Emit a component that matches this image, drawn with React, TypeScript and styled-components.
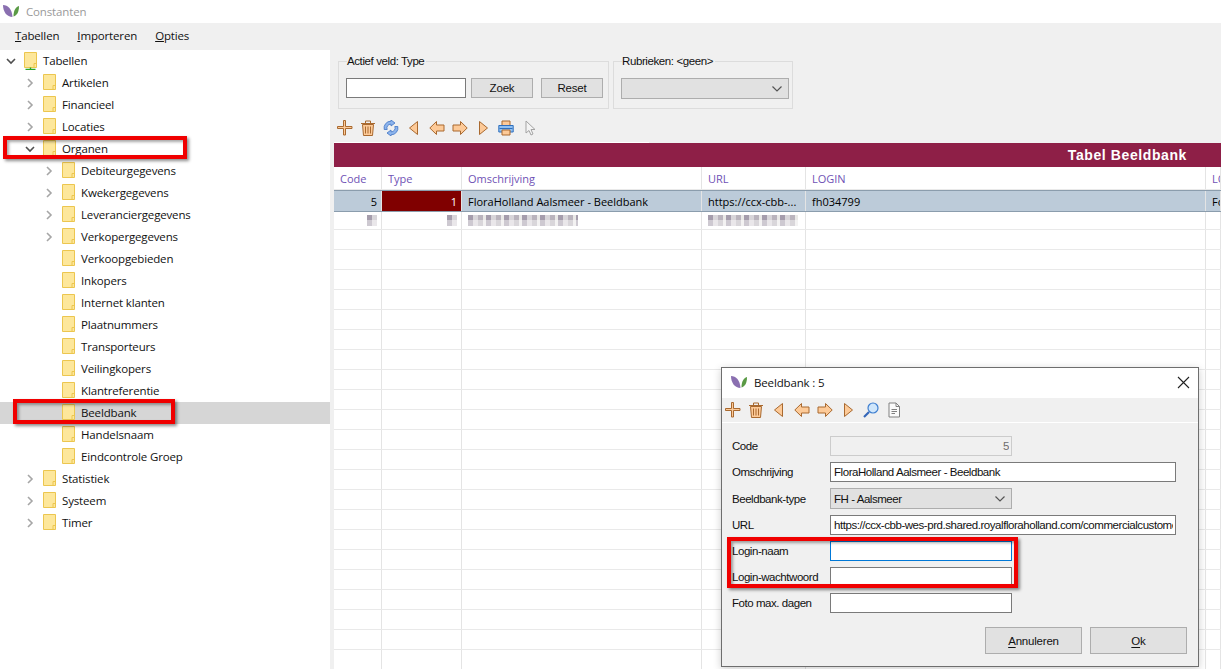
import React from "react";
import styled, { createGlobalStyle } from "styled-components";

const GlobalStyle = createGlobalStyle`
  html, body {
    margin: 0;
    padding: 0;
    background: #f0f0f0;
  }
  * {
    box-sizing: border-box;
  }
`;

const UI_FONT = `"Open Sans", "Noto Sans", sans-serif`;
const FORM_FONT = `"Liberation Sans", Arial, sans-serif`;

const stroke = "#a9692f";
const fill = "#fdca98";

/* ---------- icons ---------- */

function Logo({ size = 18 }: { size?: number }) {
  return (
    <svg width={size} height={size * 0.78} viewBox="0 0 18 14">
      <path d="M1 1C6 1 10 5 10.5 13C5 13 1 8 1 1Z" fill="#8a6fb0" />
      <path d="M17 2C13.5 3 11.5 6.5 11.5 12.5C15 11.5 17 8 17 2Z" fill="#5a9a45" />
    </svg>
  );
}

function Chevron({ open }: { open: boolean }) {
  return (
    <svg width="10" height="10" viewBox="0 0 10 10" fill="none">
      {open ? (
        <path d="M1 3L5 7L9 3" stroke="#4f4f4f" strokeWidth="1.6" />
      ) : (
        <path d="M3 1L7 5L3 9" stroke="#a6a6a6" strokeWidth="1.6" />
      )}
    </svg>
  );
}

function Folder({ root }: { root?: boolean }) {
  return (
    <svg width="13" height="18" viewBox="0 0 13 18">
      <path d="M.5.5H12.5V15.5H.5Z" fill="#fde79b" stroke="#ecc64f" />
      <path d="M10 15.5V11.5H12.5" fill="none" stroke="#ecc64f" />
      {root && <path d="M6.5 15.5V17M1.5 17.5H11.5" stroke="#27a527" strokeWidth="1.4" />}
    </svg>
  );
}

function Caret() {
  return (
    <svg width="12" height="8" viewBox="0 0 12 8" fill="none">
      <path d="M1.5 1.5L6 6L10.5 1.5" stroke="#555" strokeWidth="1.2" />
    </svg>
  );
}

const toolIcons: Record<string, React.ReactNode> = {
  plus: <path d="M6.5 .5H8.5V6.5H15V8.5H8.5V15H6.5V8.5H.5V6.5H6.5Z" fill={fill} stroke={stroke} />,
  trash: (
    <>
      <path d="M2.5 4.5H13.5L12.5 15.5H3.5Z" fill={fill} stroke={stroke} />
      <path d="M1 3.5H15M5.5 3V1H10.5V3M5.5 6.5V13.5M8 6.5V13.5M10.5 6.5V13.5" fill="none" stroke={stroke} />
    </>
  ),
  refresh: (
    <>
      <path d="M1.2 9.5A6.8 6.8 0 0 1 8 1.2V0L12 3L8 6V4.2A3.8 3.8 0 0 0 4.2 9.5Z" fill="#8db4ec" stroke="#3f73c4" strokeWidth=".8" />
      <path d="M14.8 6.5A6.8 6.8 0 0 1 8 14.8V16L4 13L8 10V11.8A3.8 3.8 0 0 0 11.8 6.5Z" fill="#8db4ec" stroke="#3f73c4" strokeWidth=".8" />
    </>
  ),
  first: <path d="M11.5 1.5V14.5L3.5 8Z" fill={fill} stroke={stroke} />,
  prev: <path d="M.8 8L7.5 1.5V5H15V11H7.5V14.5Z" fill={fill} stroke={stroke} />,
  next: <path d="M15.2 8L8.5 1.5V5H1V11H8.5V14.5Z" fill={fill} stroke={stroke} />,
  last: <path d="M4.5 1.5V14.5L12.5 8Z" fill={fill} stroke={stroke} />,
  print: (
    <>
      <path d="M4 6V1H12V6" fill={fill} stroke={stroke} />
      <path d="M.8 5.5H15.2V12H.8Z" fill="#8fc0f2" stroke="#2f6fbd" />
      <path d="M1.5 8.5H14.5" stroke="#2f6fbd" />
      <path d="M4 10V15H12V10Z" fill={fill} stroke={stroke} />
    </>
  ),
  cursor: <path d="M4 1V13L7 10.5L9 15L11 14L9 9.5H13Z" fill="#f4f4f4" stroke="#a3a3a3" />,
  search: (
    <>
      <circle cx="10" cy="6" r="5" fill="#cfe6fb" stroke="#3f7fd0" strokeWidth="1.2" />
      <path d="M6 10L1 15" stroke="#3466b8" strokeWidth="2.2" />
    </>
  ),
  doc: (
    <>
      <path d="M3 1H10L13.5 4.5V15H3Z" fill="#fafafa" stroke="#808080" />
      <path d="M10 1V4.5H13.5M5.5 7.5H11M5.5 9.5H11M5.5 11.5H9" fill="none" stroke="#808080" />
    </>
  ),
};

/* ---------- page ---------- */

const Page = styled.div`
  width: 1221px;
  height: 669px;
  overflow: hidden;
  position: relative;
  display: flex;
  flex-direction: column;
  background: #f0f0f0;
  font-family: ${UI_FONT};
  font-size: 11.5px;
  letter-spacing: -0.15px;
  color: #111;
`;

const TitleBar = styled.div`
  height: 23px;
  flex: none;
  display: flex;
  align-items: center;
  gap: 6px;
  padding-left: 2px;
  background: #fff;
  color: #9a9a9a;
`;

const MenuBar = styled.div`
  height: 27px;
  flex: none;
  display: flex;
  align-items: center;
  gap: 18px;
  padding: 0 0 2px 15px;
  background: #f0f0f0;
`;

const Main = styled.div`
  flex: 1;
  min-height: 0;
  display: flex;
`;

/* ---------- tree ---------- */

const Tree = styled.div`
  width: 330px;
  flex: none;
  background: #fff;
`;

const TreeRow = styled.div<{ $level: number; $active?: boolean }>`
  height: 22px;
  display: flex;
  align-items: center;
  padding-left: ${(p) => 6 + p.$level * 19}px;
  background: ${(p) => (p.$active ? "#d6d6d6" : "transparent")};
`;

const ChevronSlot = styled.span`
  width: 18px;
  flex: none;
  display: flex;
`;

const TreeLabel = styled.span`
  margin-left: 6px;
  padding-bottom: 2px;
`;

/* ---------- right panel ---------- */

const Content = styled.div`
  flex: 1;
  min-width: 0;
  display: flex;
  flex-direction: column;
  padding-left: 4px;
`;

const Filters = styled.div`
  height: 68px;
  flex: none;
  display: flex;
  align-items: flex-start;
  gap: 4px;
  padding: 4px 0 0 4px;
  font-family: ${FORM_FONT};
  font-size: 11.5px;
  letter-spacing: -0.4px;
`;

const Group = styled.fieldset<{ $width: number }>`
  width: ${(p) => p.$width}px;
  height: 55px;
  margin: 0;
  padding: 10px 3px 0 7px;
  display: flex;
  align-items: flex-start;
  gap: 5px;
  border: 1px solid #dcdcdc;
`;

const GroupTitle = styled.legend`
  margin-left: 1px;
  padding: 0 2px 0 0;
  line-height: 14px;
`;

const FilterInput = styled.input`
  width: 120px;
  height: 20px;
  padding: 0 3px;
  border: 1px solid #7a7a7a;
  background: #fff;
`;

const GrayButton = styled.button<{ $width: number; $gap?: number }>`
  width: ${(p) => p.$width}px;
  height: 20px;
  margin-left: ${(p) => p.$gap ?? 0}px;
  padding: 0;
  border: 1px solid #adadad;
  background: #e1e1e1;
  font-family: ${FORM_FONT};
  font-size: 11.5px;
  letter-spacing: -0.2px;
  color: #111;
`;

const SelectBox = styled.div<{ $width: number }>`
  width: ${(p) => p.$width}px;
  height: 21px;
  padding: 0 5px 0 3px;
  display: flex;
  align-items: center;
  justify-content: space-between;
  border: 1px solid #adadad;
  background: #e1e1e1;
  color: #111;
`;

const Toolbar = styled.div<{ $height: number; $pad: number; $bottom?: number }>`
  height: ${(p) => p.$height}px;
  flex: none;
  display: flex;
  align-items: center;
  padding-left: ${(p) => p.$pad}px;
  padding-bottom: ${(p) => p.$bottom ?? 0}px;
`;

const ToolIcon = styled.svg<{ $left: number }>`
  flex: none;
  margin-left: ${(p) => p.$left}px;
`;

const TableBanner = styled.div`
  height: 24px;
  flex: none;
  position: relative;
  display: flex;
  align-items: center;
  justify-content: flex-end;
  padding-right: 34px;
  background: #8e1f47;
  color: #fff;
  font-family: ${FORM_FONT};
  font-size: 14px;
  font-weight: 700;
  letter-spacing: 0.6px;

  &::before {
    content: "";
    position: absolute;
    left: 0;
    top: -1px;
    width: 315px;
    height: 1px;
    background: #fff;
  }
`;

const GridBody = styled.div`
  flex: 1;
  min-height: 0;
  overflow: hidden;
  background: #fff;
  font-size: 11px;
  letter-spacing: 0;
`;

const GridRow = styled.div<{ $height: number; $selected?: boolean }>`
  height: ${(p) => p.$height}px;
  display: grid;
  grid-template-columns: 48px 80px 240px 104px 400px 1fr;
  background: ${(p) => (p.$selected ? "#bccbd9" : "#fff")};
  border-top: ${(p) => (p.$selected ? "1px solid #8b9dad" : "none")};
  border-bottom: 1px solid ${(p) => (p.$selected ? "#8b9dad" : "#e9e9e9")};
`;

const Cell = styled.div<{ $right?: boolean; $mark?: boolean }>`
  padding: 0 4px 0 6px;
  display: flex;
  align-items: center;
  justify-content: ${(p) => (p.$right ? "flex-end" : "flex-start")};
  overflow: hidden;
  white-space: nowrap;
  border-right: 1px solid #e4e4e4;
  background: ${(p) => (p.$mark ? "#800000" : "transparent")};
  color: ${(p) => (p.$mark ? "#fff" : "#000")};
`;

const HeadCell = styled(Cell)`
  color: #6f52b5;
`;

const Blurred = styled.span<{ $width: number }>`
  display: block;
  width: ${(p) => p.$width}px;
  height: 11px;
  opacity: 0.8;
  background:
    linear-gradient(180deg, transparent 50%, rgba(255, 255, 255, 0.45) 50%),
    repeating-linear-gradient(90deg, #8f8598 0 5px, #cfcbd0 5px 10px, #a9a2ad 10px 15px, #e6e4e2 15px 18px);
`;

/* ---------- dialog ---------- */

const Dialog = styled.div`
  position: absolute;
  left: 721px;
  top: 367px;
  width: 478px;
  height: 300px;
  display: flex;
  flex-direction: column;
  background: #f0f0f0;
  border: 1px solid #6e6e6e;
  box-shadow: 0 2px 8px rgba(0, 0, 0, 0.2);
`;

const DialogTitle = styled.div`
  height: 30px;
  flex: none;
  display: flex;
  align-items: center;
  gap: 6px;
  padding: 0 8px 1px;
  background: #fff;
`;

const CloseButton = styled.svg`
  margin-left: auto;
`;

const DialogForm = styled.div`
  flex: 1;
  display: flex;
  flex-direction: column;
  gap: 6px;
  padding: 13px 0 0 10px;
  border-top: 1px solid #fff;
  font-family: ${FORM_FONT};
  font-size: 11.5px;
  letter-spacing: -0.45px;
`;

const FormRow = styled.div`
  min-height: 20px;
  display: flex;
  align-items: center;
`;

const FormLabel = styled.label`
  width: 98px;
  flex: none;
  white-space: nowrap;
`;

const FormInput = styled.input<{ $width: number; $focus?: boolean; $right?: boolean }>`
  width: ${(p) => p.$width}px;
  height: 20px;
  padding: 0 2px 0 3px;
  border: 1px solid ${(p) => (p.$focus ? "#0078d7" : "#7a7a7a")};
  background: #fff;
  font-family: ${FORM_FONT};
  font-size: 11.5px;
  letter-spacing: -0.45px;
  color: #111;
  outline: none;
  text-align: ${(p) => (p.$right ? "right" : "left")};

  &:disabled {
    border-color: #cccccc;
    background: #f0f0f0;
    color: #6d6d6d;
  }
`;

const DialogActions = styled.div`
  display: flex;
  justify-content: flex-end;
  gap: 8px;
  margin-top: 8px;
  padding-right: 11px;
`;

const DialogButton = styled.button`
  width: 97px;
  height: 27px;
  padding: 0;
  border: 1px solid #adadad;
  background: #e1e1e1;
  font-family: ${FORM_FONT};
  font-size: 11.5px;
  letter-spacing: -0.2px;
  color: #111;

  u {
    text-underline-offset: 2px;
  }
`;

/* red marks somebody drew over the screenshot */
const Callout = styled.div<{ $x: number; $y: number; $w: number; $h: number }>`
  position: absolute;
  left: ${(p) => p.$x}px;
  top: ${(p) => p.$y}px;
  width: ${(p) => p.$w}px;
  height: ${(p) => p.$h}px;
  border: 4px solid #f00000;
  box-shadow: 2px 2px 3px rgba(0, 0, 0, 0.45), inset 2px 2px 3px rgba(0, 0, 0, 0.35);
  pointer-events: none;
`;

/* ---------- data ---------- */

type TreeItem = { label: string; level: number; chevron?: "open" | "closed"; active?: boolean; root?: boolean };

const treeItems: TreeItem[] = [
  { label: "Tabellen", level: 0, chevron: "open", root: true },
  { label: "Artikelen", level: 1, chevron: "closed" },
  { label: "Financieel", level: 1, chevron: "closed" },
  { label: "Locaties", level: 1, chevron: "closed" },
  { label: "Organen", level: 1, chevron: "open" },
  { label: "Debiteurgegevens", level: 2, chevron: "closed" },
  { label: "Kwekergegevens", level: 2, chevron: "closed" },
  { label: "Leveranciergegevens", level: 2, chevron: "closed" },
  { label: "Verkopergegevens", level: 2, chevron: "closed" },
  { label: "Verkoopgebieden", level: 2 },
  { label: "Inkopers", level: 2 },
  { label: "Internet klanten", level: 2 },
  { label: "Plaatnummers", level: 2 },
  { label: "Transporteurs", level: 2 },
  { label: "Veilingkopers", level: 2 },
  { label: "Klantreferentie", level: 2 },
  { label: "Beeldbank", level: 2, active: true },
  { label: "Handelsnaam", level: 2 },
  { label: "Eindcontrole Groep", level: 2 },
  { label: "Statistiek", level: 1, chevron: "closed" },
  { label: "Systeem", level: 1, chevron: "closed" },
  { label: "Timer", level: 1, chevron: "closed" },
];

const mainTools: [string, number][] = [
  ["plus", 3],
  ["trash", 7],
  ["refresh", 7],
  ["first", 7],
  ["prev", 7],
  ["next", 7],
  ["last", 7],
  ["print", 7],
  ["cursor", 8],
];

const dialogTools: [string, number][] = [
  ["plus", 0],
  ["trash", 7],
  ["first", 7],
  ["prev", 7],
  ["next", 7],
  ["last", 7],
  ["search", 7],
  ["doc", 7],
];

function Tool({ name, left }: { name: string; left: number }) {
  return (
    <ToolIcon $left={left} width="16" height="16" viewBox="0 0 16 16">
      {toolIcons[name]}
    </ToolIcon>
  );
}

function Field({ label, children }: { label: string; children: React.ReactNode }) {
  return (
    <FormRow>
      <FormLabel>{label}</FormLabel>
      {children}
    </FormRow>
  );
}

export default function App() {
  const emptyRows = Array.from({ length: 22 }, (_, i) => i);
  return (
    <Page>
      <GlobalStyle />
      <TitleBar>
        <Logo />
        <span>Constanten</span>
      </TitleBar>
      <MenuBar>
        <span><u>T</u>abellen</span>
        <span><u>I</u>mporteren</span>
        <span><u>O</u>pties</span>
      </MenuBar>

      <Main>
        <Tree>
          {treeItems.map((item) => (
            <TreeRow key={item.label} $level={item.level} $active={item.active}>
              <ChevronSlot>{item.chevron && <Chevron open={item.chevron === "open"} />}</ChevronSlot>
              <Folder root={item.root} />
              <TreeLabel>{item.label}</TreeLabel>
            </TreeRow>
          ))}
        </Tree>

        <Content>
          <Filters>
            <Group $width={271}>
              <GroupTitle>Actief veld: Type</GroupTitle>
              <FilterInput />
              <GrayButton $width={62}>Zoek</GrayButton>
              <GrayButton $width={62} $gap={3}>Reset</GrayButton>
            </Group>
            <Group $width={180}>
              <GroupTitle>Rubrieken: &lt;geen&gt;</GroupTitle>
              <SelectBox $width={168}>
                <span />
                <Caret />
              </SelectBox>
            </Group>
          </Filters>

          <Toolbar $height={25} $pad={0} $bottom={6}>
            {mainTools.map(([name, left], i) => (
              <Tool key={i} name={name} left={left} />
            ))}
          </Toolbar>

          <TableBanner>Tabel Beeldbank</TableBanner>

          <GridBody>
            <GridRow $height={23}>
              <HeadCell>Code</HeadCell>
              <HeadCell>Type</HeadCell>
              <HeadCell>Omschrijving</HeadCell>
              <HeadCell>URL</HeadCell>
              <HeadCell>LOGIN</HeadCell>
              <HeadCell>LO</HeadCell>
            </GridRow>
            <GridRow $height={22} $selected>
              <Cell $right>5</Cell>
              <Cell $right $mark>1</Cell>
              <Cell>FloraHolland Aalsmeer - Beeldbank</Cell>
              <Cell>https://ccx-cbb-...</Cell>
              <Cell>fh034799</Cell>
              <Cell>Fo</Cell>
            </GridRow>
            <GridRow $height={18}>
              <Cell $right><Blurred $width={10} /></Cell>
              <Cell $right><Blurred $width={10} /></Cell>
              <Cell><Blurred $width={110} /></Cell>
              <Cell><Blurred $width={90} /></Cell>
              <Cell />
              <Cell />
            </GridRow>
            {emptyRows.map((i) => (
              <GridRow key={i} $height={20}>
                <Cell /><Cell /><Cell /><Cell /><Cell /><Cell />
              </GridRow>
            ))}
          </GridBody>
        </Content>
      </Main>

      <Dialog>
        <DialogTitle>
          <Logo />
          <span>Beeldbank : 5</span>
          <CloseButton width="13" height="13" viewBox="0 0 13 13">
            <path d="M1 1L12 12M12 1L1 12" stroke="#222" strokeWidth="1.1" />
          </CloseButton>
        </DialogTitle>
        <Toolbar $height={24} $pad={3}>
          {dialogTools.map(([name, left], i) => (
            <Tool key={i} name={name} left={left} />
          ))}
        </Toolbar>
        <DialogForm>
          <Field label="Code">
            <FormInput $width={182} $right disabled value="5" readOnly />
          </Field>
          <Field label="Omschrijving">
            <FormInput $width={346} value="FloraHolland Aalsmeer - Beeldbank" readOnly />
          </Field>
          <Field label="Beeldbank-type">
            <SelectBox $width={182}>
              <span>FH - Aalsmeer</span>
              <Caret />
            </SelectBox>
          </Field>
          <Field label="URL">
            <FormInput
              $width={346}
              value="https://ccx-cbb-wes-prd.shared.royalfloraholland.com/commercialcustomer"
              readOnly
            />
          </Field>
          <Field label="Login-naam">
            <FormInput $width={182} $focus />
          </Field>
          <Field label="Login-wachtwoord">
            <FormInput $width={182} />
          </Field>
          <Field label="Foto max. dagen">
            <FormInput $width={182} />
          </Field>
          <DialogActions>
            <DialogButton><u>A</u>nnuleren</DialogButton>
            <DialogButton><u>O</u>k</DialogButton>
          </DialogActions>
        </DialogForm>
      </Dialog>

      <Callout $x={3} $y={136} $w={184} $h={23} />
      <Callout $x={13} $y={399} $w={162} $h={25} />
      <Callout $x={727} $y={537} $w={291} $h={51} />
    </Page>
  );
}
